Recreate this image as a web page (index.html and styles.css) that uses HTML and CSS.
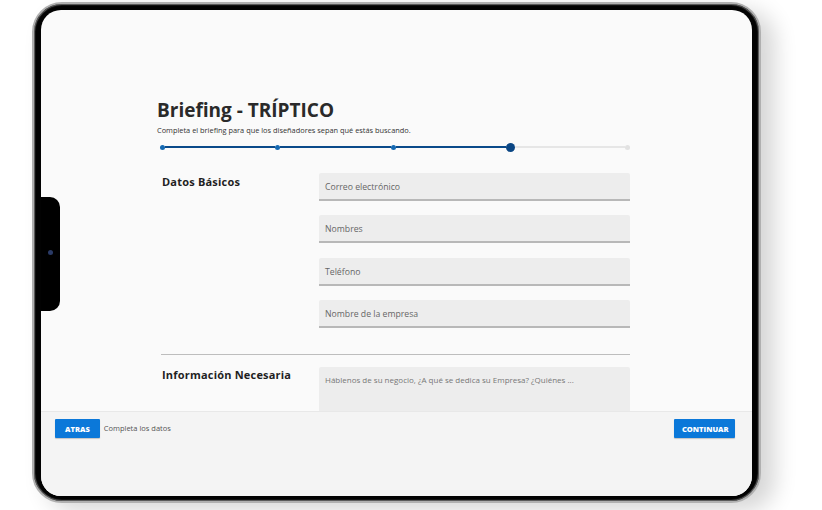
FILE: index.html
```html
<!DOCTYPE html>
<html lang="es">
<head>
<meta charset="utf-8">
<title>Briefing - TRÍPTICO</title>
<link rel="stylesheet" href="styles.css">
</head>
<body>
<div class="device">
  <div class="screen">
    <div class="notch"><span class="camera"></span></div>
    <main class="main">
      <header class="head">
        <h1 class="title">Briefing - TRÍPTICO</h1>
        <p class="subtitle">Completa el briefing para que los diseñadores sepan qué estás buscando.</p>
        <div class="progress">
          <span class="dot done"></span>
          <span class="line done"></span>
          <span class="dot done"></span>
          <span class="line done"></span>
          <span class="dot done"></span>
          <span class="line done"></span>
          <span class="dot current"></span>
          <span class="line"></span>
          <span class="dot"></span>
        </div>
      </header>
      <section class="row">
        <h2 class="label">Datos Básicos</h2>
        <div class="fields">
          <div class="input">Correo electrónico</div>
          <div class="input">Nombres</div>
          <div class="input">Teléfono</div>
          <div class="input">Nombre de la empresa</div>
        </div>
      </section>
      <hr class="divider">
      <section class="row second">
        <h2 class="label">Información Necesaria</h2>
        <div class="fields">
          <div class="textarea">Háblenos de su negocio, ¿A qué se dedica su Empresa? ¿Quiénes ...</div>
        </div>
      </section>
    </main>
    <footer class="footer">
      <button class="btn">ATRAS</button>
      <span class="hint">Completa los datos</span>
      <button class="btn next">CONTINUAR</button>
    </footer>
  </div>
</div>
</body>
</html>
```
FILE: styles.css
```css
* { box-sizing: border-box; }
html, body { margin: 0; padding: 0; }
body {
  width: 822px;
  height: 510px;
  background: #ffffff;
  padding: 2px 0 0 32px;
  font-family: "Open Sans", "Liberation Sans", sans-serif;
  overflow: hidden;
}
.device {
  width: 729px;
  height: 501px;
  background: #020202;
  border: 2px solid #b0b0b0;
  border-radius: 30px;
  padding: 6px 7px 5px 7px;
  box-shadow: 14px 8px 22px rgba(0,0,0,0.16), inset 0 0 0 1px #5a5a5a, inset 0 0 0 2px #111;
}
.screen {
  position: relative;
  width: 100%;
  height: 100%;
  background: #fafafa;
  border-radius: 20px;
  overflow: hidden;
  display: flex;
  flex-direction: column;
}
.notch {
  position: absolute;
  left: 0;
  top: 187px;
  width: 19px;
  height: 114px;
  background: #000;
  border-radius: 0 10px 10px 0;
}
.camera {
  position: absolute;
  left: 7px;
  top: 53px;
  width: 5px;
  height: 5px;
  border-radius: 50%;
  background: #2a3a66;
}
.main {
  flex: 1;
  overflow: hidden;
  padding: 89px 0 0 116px;
}
.head { width: 473px; }
.title {
  margin: 0;
  font-family: "Open Sans", sans-serif;
  font-weight: 700;
  font-size: 19px;
  line-height: 22px;
  color: #2a2a2a;
  letter-spacing: 0;
}
.subtitle {
  margin: 4px 0 0;
  font-size: 7.4px;
  line-height: 10px;
  color: #333;
  letter-spacing: 0;
}
.progress {
  display: flex;
  align-items: center;
  height: 10px;
  margin: 7px 0 0 3px;
  width: 470px;
}
.dot {
  width: 5px;
  height: 5px;
  border-radius: 50%;
  background: #e2e2e2;
  flex: none;
}
.dot.done { background: #1569b2; }
.dot.current { width: 9px; height: 9px; background: #0a4684; }
.line {
  flex: 1;
  height: 2px;
  background: #e6e6e6;
}
.line.done { background: #0a4a8a; }
.row {
  display: grid;
  grid-template-columns: 157px 311px;
  margin: 21px 0 0 5px;
}
.label {
  margin: 0;
  padding-top: 3px;
  font-size: 11px;
  line-height: 12px;
  font-weight: 700;
  color: #1f1f1f;
  letter-spacing: 0.2px;
}
.fields {
  display: flex;
  flex-direction: column;
  gap: 14.33px;
}
.input {
  height: 28px;
  background: #ededed;
  border-bottom: 2px solid #b8b8b8;
  border-radius: 2px 2px 0 0;
  padding: 9px 6px 0;
  font-size: 8.7px;
  line-height: 10px;
  color: #666;
}
.divider {
  margin: 26px 0 0 4px;
  width: 469px;
  border: 0;
  border-top: 1.5px solid #bdbdbd;
  height: 0;
}
.row.second { margin-top: 12px; }
.second .label { padding-top: 2px; }
.textarea {
  height: 80px;
  background: #ededed;
  border-radius: 2px 2px 0 0;
  padding: 8px 6px;
  font-size: 8px;
  line-height: 10px;
  color: #777;
}
.footer {
  height: 85px;
  flex: none;
  background: #f4f4f4;
  border-top: 1px solid #e8e8e8;
  display: flex;
  align-items: flex-start;
  padding: 7px 17px 0 14px;
  gap: 4px;
}
.btn {
  height: 19px;
  border: 0;
  border-radius: 1px;
  background: #0b78d9;
  color: #fff;
  font-family: "Open Sans", sans-serif;
  font-weight: 800;
  font-size: 7.5px;
  padding: 0 10px;
  box-shadow: 0 1px 1px rgba(0,0,0,0.2);
}
.hint {
  font-size: 7.5px;
  line-height: 19px;
  color: #555;
  flex: 1;
}
.next { padding: 0 8px; width: 61px; }
```
